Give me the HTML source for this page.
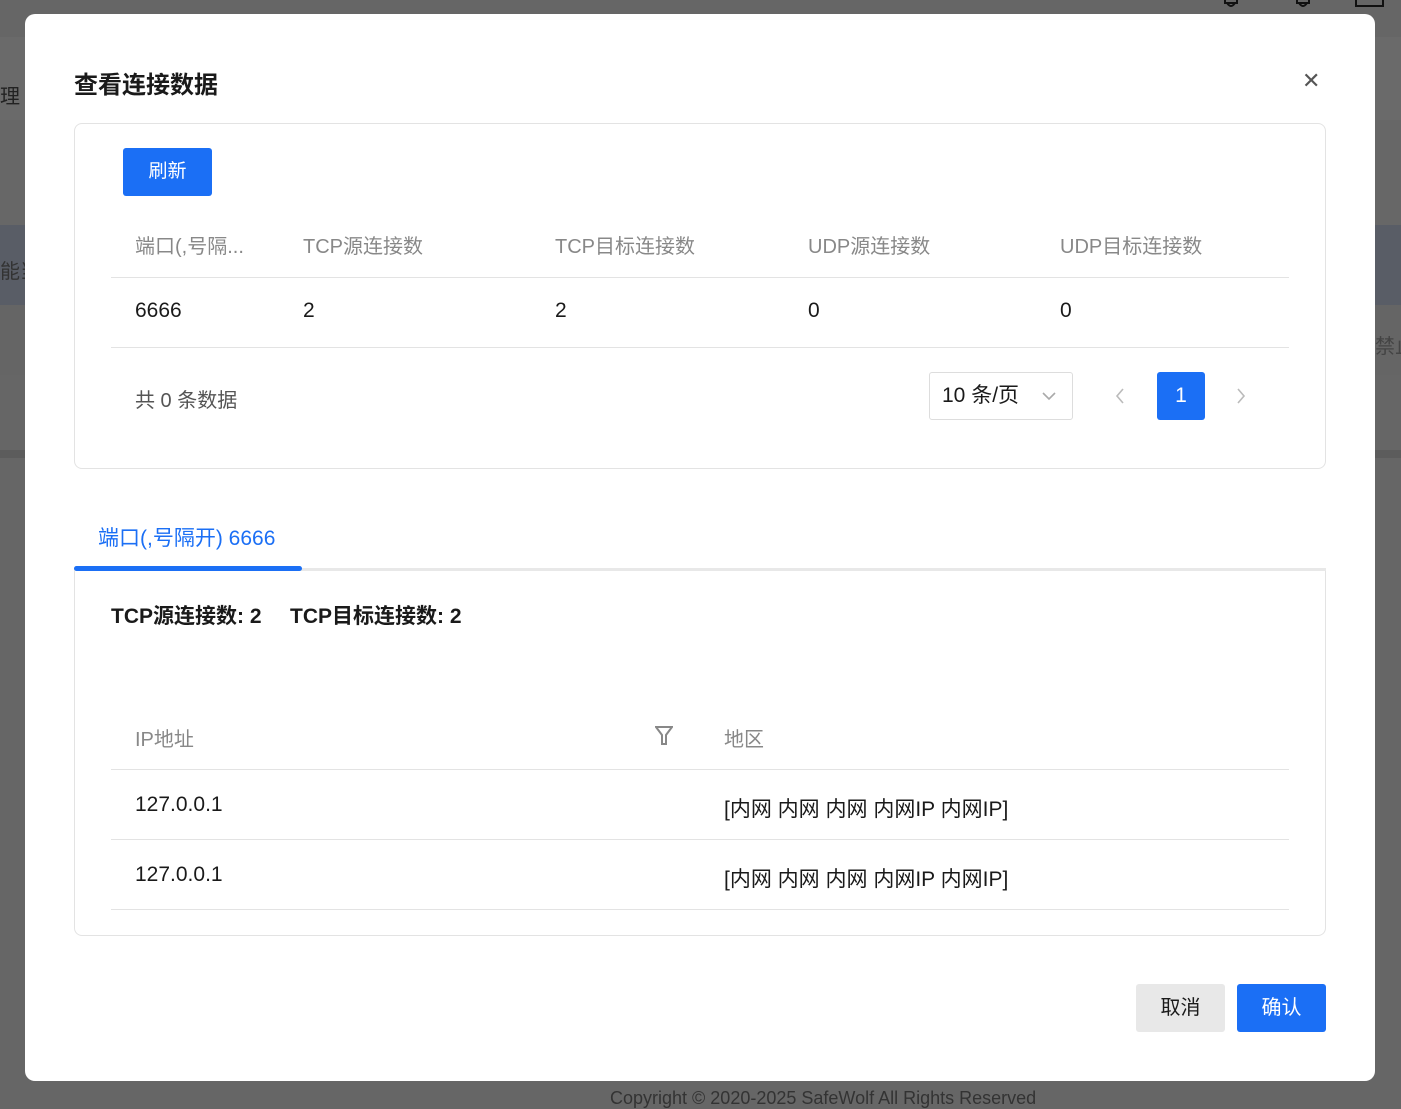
<!DOCTYPE html>
<html><head><meta charset="utf-8"><style>
*{box-sizing:border-box;margin:0;padding:0}
body{width:1401px;height:1096px;overflow:hidden;background:#666;font-family:"Liberation Sans","Noto Sans CJK SC",sans-serif;position:relative;color:#1a1a1a}
.bg{position:absolute;left:0;width:1401px}
.modal{position:absolute;left:25px;top:14px;width:1350px;height:1067px;background:#fff;border-radius:10px}
.a{position:absolute;white-space:nowrap}
.title{left:49px;top:51px;font-size:24px;font-weight:bold;color:#1a1a1a}
.close{left:1277px;top:54px;font-size:22px;color:#555}
.card{position:absolute;left:49px;border:1px solid #e3e3e3;border-radius:8px;width:1252px}
.btn{background:#1b6ff5;color:#fff;border-radius:3px;text-align:center;font-size:19px}
.th{color:#888;font-size:20px}
.td{color:#1a1a1a;font-size:21px}
.line{position:absolute;height:1px;background:#e3e3e3}
</style></head><body>
<div class="bg" style="top:37px;height:83px;background:#6a6a6a"></div>
<div class="bg" style="top:120px;height:105px;background:#676767"></div>
<div class="bg" style="top:225px;height:80px;background:#595d66"></div>
<div class="bg" style="top:305px;height:70px;background:#656565"></div>
<div class="bg" style="top:375px;height:75px;background:#666"></div>
<div class="bg" style="top:450px;height:8px;background:#5c5c5c"></div>
<svg class="a" style="left:1205px;top:0" width="190" height="12"><path d="M20 0V3H32V0M22 3Q26 9 30 3" fill="none" stroke="#111" stroke-width="2"/><path d="M92 0V3H104V0M94 3Q98 9 102 3" fill="none" stroke="#111" stroke-width="2"/><path d="M151 0V6H178V0" fill="none" stroke="#111" stroke-width="2"/></svg>
<div class="a" style="left:0;top:80px;font-size:20px;color:#222">理</div>
<div class="a" style="left:0;top:255px;font-size:20px;color:#333">能当</div>
<div class="a" style="left:1375px;top:330px;font-size:20px;color:#444">禁止</div>
<div class="a" style="left:610px;top:1088px;font-size:18px;color:#333">Copyright © 2020-2025 SafeWolf All Rights Reserved</div>
<div class="modal">
 <div class="a title">查看连接数据</div>
 <div class="a close">✕</div>
 <div class="card" style="top:109px;height:346px">
  <div class="a btn" style="left:48px;top:24px;width:89px;height:48px;line-height:48px">刷新</div>
  <div class="a th" style="left:60px;top:106px">端口(,号隔...</div>
  <div class="a th" style="left:228px;top:106px">TCP源连接数</div>
  <div class="a th" style="left:480px;top:106px">TCP目标连接数</div>
  <div class="a th" style="left:733px;top:106px">UDP源连接数</div>
  <div class="a th" style="left:985px;top:106px">UDP目标连接数</div>
  <div class="line" style="left:36px;top:153px;width:1178px"></div>
  <div class="a td" style="left:60px;top:175px">6666</div>
  <div class="a td" style="left:228px;top:175px">2</div>
  <div class="a td" style="left:480px;top:175px">2</div>
  <div class="a td" style="left:733px;top:175px">0</div>
  <div class="a td" style="left:985px;top:175px">0</div>
  <div class="line" style="left:36px;top:223px;width:1178px"></div>
  <div class="a" style="left:60px;top:260px;font-size:20px;color:#555">共 0 条数据</div>
  <div class="a" style="left:854px;top:248px;width:144px;height:48px;border:1px solid #ddd;border-radius:3px;font-size:21px;line-height:46px;padding-left:12px">10 条/页<svg style="position:absolute;left:112px;top:18px" width="14" height="10"><path d="M1 2L7 8L13 2" fill="none" stroke="#aaa" stroke-width="1.6"/></svg></div>
  <svg class="a" style="left:1040px;top:264px" width="10" height="16"><path d="M8 1L2 8L8 15" fill="none" stroke="#bbb" stroke-width="1.6"/></svg>
  <div class="a btn" style="left:1082px;top:248px;width:48px;height:48px;line-height:48px;font-size:21px">1</div>
  <svg class="a" style="left:1161px;top:264px" width="10" height="16"><path d="M2 1L8 8L2 15" fill="none" stroke="#bbb" stroke-width="1.6"/></svg>
 </div>
 <div class="a" style="left:73px;top:508px;font-size:21px;color:#1b6ff5">端口(,号隔开) 6666</div>
 <div class="a" style="left:49px;top:554px;width:1252px;height:3px;background:#e8e8e8"></div>
 <div class="a" style="left:49px;top:552px;width:228px;height:5px;background:#1b6ff5;border-radius:3px"></div>
 <div class="card" style="top:557px;height:365px;border-top:none;border-radius:0 0 8px 8px">
  <div class="a" style="left:36px;top:29px;font-size:21px;font-weight:bold">TCP源连接数: 2</div>
  <div class="a" style="left:215px;top:29px;font-size:21px;font-weight:bold">TCP目标连接数: 2</div>
  <div class="a th" style="left:60px;top:152px">IP地址</div>
  <svg class="a" style="left:580px;top:155px" width="18" height="20" viewBox="0 0 18 20"><path d="M1 1H17L11 9V18H7V9Z" fill="none" stroke="#888" stroke-width="2"/></svg>
  <div class="a th" style="left:649px;top:152px">地区</div>
  <div class="line" style="left:36px;top:198px;width:1178px"></div>
  <div class="a td" style="left:60px;top:222px">127.0.0.1</div>
  <div class="a td" style="left:649px;top:222px">[内网 内网 内网 内网IP 内网IP]</div>
  <div class="line" style="left:36px;top:268px;width:1178px"></div>
  <div class="a td" style="left:60px;top:292px">127.0.0.1</div>
  <div class="a td" style="left:649px;top:292px">[内网 内网 内网 内网IP 内网IP]</div>
  <div class="line" style="left:36px;top:338px;width:1178px"></div>
 </div>
 <div class="a" style="left:1111px;top:970px;width:89px;height:48px;line-height:48px;background:#e8e8e8;border-radius:3px;text-align:center;font-size:20px">取消</div>
 <div class="a btn" style="left:1212px;top:970px;width:89px;height:48px;line-height:48px;font-size:20px">确认</div>
</div>
</body></html>
